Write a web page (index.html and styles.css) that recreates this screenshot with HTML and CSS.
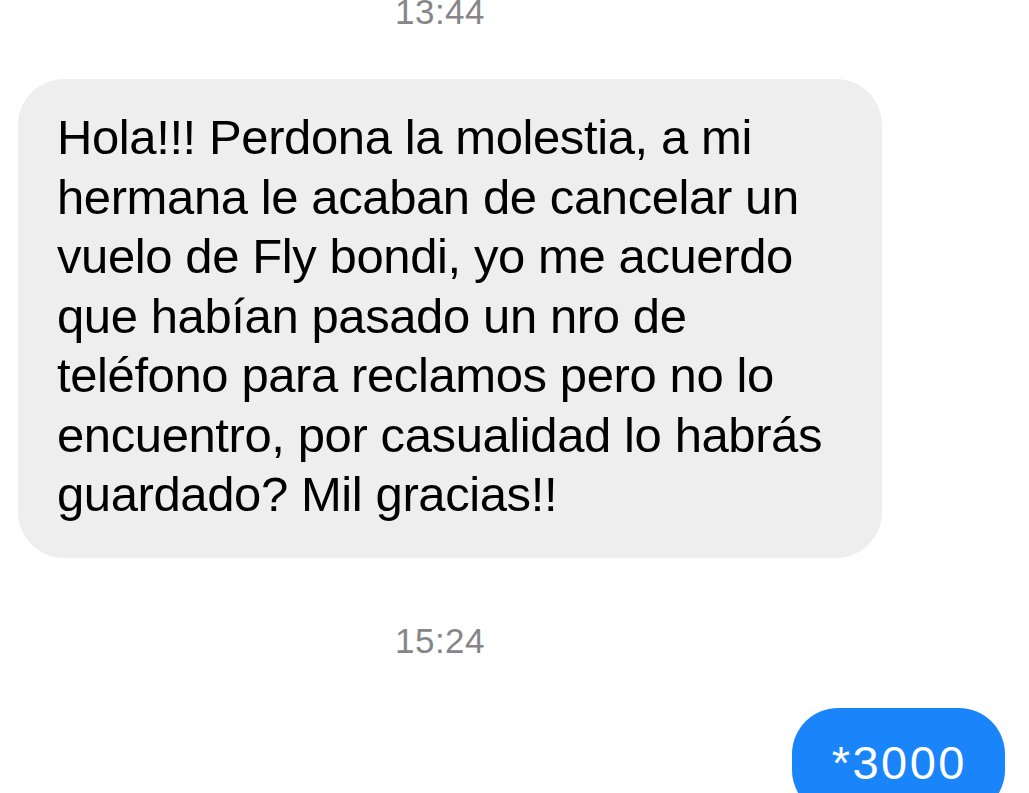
FILE: index.html
```html
<!DOCTYPE html>
<html lang="es">
<head>
    <meta charset="UTF-8">
    <meta name="viewport" content="width=device-width, initial-scale=1.0">
    <title>Mensajes</title>
    <link rel="stylesheet" href="styles.css">
</head>
<body>
    <div class="thread">
        <div class="time time-top">13:44</div>

        <div class="row row-in">
            <div class="bubble bubble-in">
                Hola!!! Perdona la molestia, a mi<br>
                hermana le acaban de cancelar un<br>
                vuelo de Fly bondi, yo me acuerdo<br>
                que habían pasado un nro de<br>
                teléfono para reclamos pero no lo<br>
                encuentro, por casualidad lo habrás<br>
                guardado? Mil gracias!!
            </div>
        </div>

        <div class="time time-mid">15:24</div>

        <div class="row row-out">
            <div class="bubble bubble-out">*3000</div>
        </div>
    </div>
</body>
</html>
```

FILE: styles.css
```css
html, body { margin: 0; padding: 0; background: #fff; }
body { font-family: "Liberation Sans", Arial, sans-serif; color: #000; overflow: hidden; height: 793px; }
.thread { width: 1029px; display: flex; flex-direction: column; }
.time { width: 880px; text-align: center; font-size: 35px; line-height: 40px; color: #86868a; letter-spacing: 0.5px; }
.time-top { margin-top: -8px; }
.time-mid { margin-top: 63px; }
.row { display: flex; }
.row-in { justify-content: flex-start; margin-top: 47px; }
.row-out { justify-content: flex-end; margin-top: 47px; }
.bubble { border-radius: 46px; white-space: nowrap; }
.bubble-in { margin-left: 18px; width: 864px; box-sizing: border-box; padding: 29px 20px 33px 39px; background: #eeeeee; font-size: 49px; line-height: 59.5px; letter-spacing: -0.4px; }
.bubble-out { margin-right: 24px; padding: 25px 38px 24px 40px; background: #1a84fb; color: #fff; font-size: 47px; line-height: 59px; letter-spacing: 2.5px; }
```
